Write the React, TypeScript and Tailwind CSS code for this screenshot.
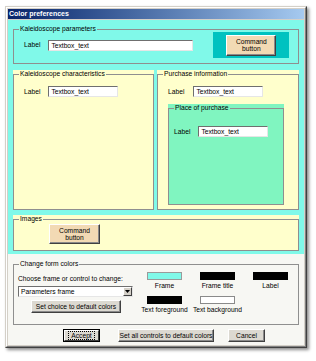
import React from "react";

const FONT = "font-['Liberation_Sans',Arial,sans-serif]";

function TextBox({ className }: { className: string }) {
  return (
    <div
      className={`h-[11px] bg-white border border-t-[#6f6f6f] border-l-[#6f6f6f] border-r-[#e6e6e6] border-b-[#e6e6e6] pl-[2px] leading-[9px] whitespace-nowrap ${className}`}
    >
      Textbox_text
    </div>
  );
}

function Btn({ className, children }: { className: string; children: React.ReactNode }) {
  return (
    <div
      className={`flex items-center justify-center text-center border border-t-white border-l-white border-r-[#404040] border-b-[#404040] shadow-[inset_-1px_-1px_0_#8a8a8a] ${className}`}
    >
      {children}
    </div>
  );
}

function Group({ title, className, children }: { title: string; className: string; children?: React.ReactNode }) {
  return (
    <fieldset className={`border border-[#8f8f8f] min-w-0 ${className}`}>
      <legend className="ml-[5px] px-[1px] leading-[8px] whitespace-nowrap">{title}</legend>
      {children}
    </fieldset>
  );
}

function LabelRow({ className, boxClass }: { className: string; boxClass: string }) {
  return (
    <div className={`flex items-center ${className}`}>
      <span className="leading-[8px]">Label</span>
      <TextBox className={boxClass} />
    </div>
  );
}

function Swatch({ color, label }: { color: string; label: string }) {
  return (
    <div className="flex flex-col items-center w-[35px]">
      <div className={`w-[35px] h-[8px] ${color}`} />
      <div className="mt-[2px] leading-[8px] whitespace-nowrap">{label}</div>
    </div>
  );
}

export default function App() {
  return (
    <div className={`w-[316px] h-[361px] bg-white pt-[6px] pl-[5px] ${FONT} text-[6.7px] text-black`}>
      <div className="w-[302px] h-[342px] border border-[#d4d0c8] border-r-[#404040] border-b-[#404040] shadow-[2px_2px_3px_rgba(0,0,0,0.45)]">
        <div className="h-full border border-white border-r-[#808080] border-b-[#808080] bg-[#d4d0c8] p-[1px] flex flex-col">
          {/* title bar */}
          <div className="h-[10px] bg-linear-to-r from-[#0a246a] to-[#a6caf0] text-white font-bold text-[7px] leading-[10px] pl-[1px] whitespace-nowrap">
            Color preferences
          </div>

          {/* cyan area */}
          <div className="mt-[1px] h-[234px] bg-[#80f9e9] pt-[5px] pl-[5px] flex flex-col">
            <Group title="Kaleidoscope parameters" className="w-[286px] h-[39px]">
              <div className="flex items-center h-[26px] mt-[-1px] pl-[10px]">
                <span className="leading-[8px]">Label</span>
                <TextBox className="ml-[8px] w-[145px]" />
                <div className="ml-[20px] w-[76px] h-[26px] bg-[#00c2c0] flex items-center justify-center">
                  <Btn className="w-[50px] h-[21px] bg-[#f2dab4] leading-[7px]">
                    Command
                    <br />
                    button
                  </Btn>
                </div>
              </div>
            </Group>

            <div className="mt-[6px] flex gap-[3px]">
              <div className="w-[141px] h-[140px] bg-[#ffffcc]">
                <Group title="Kaleidoscope characteristics" className="w-full h-full">
                  <LabelRow className="mt-[8px] pl-[10px]" boxClass="ml-[8px] w-[70px]" />
                </Group>
              </div>
              <div className="w-[142px] h-[140px] bg-[#ffffcc]">
                <Group title="Purchase information" className="w-full h-full">
                  <LabelRow className="mt-[8px] pl-[10px]" boxClass="ml-[9px] w-[70px]" />
                  <div className="ml-[10px] mt-[7px] w-[116px] h-[101px] bg-[#80f5c0]">
                    <Group title="Place of purchase" className="w-full h-full">
                      <LabelRow className="mt-[14px] pl-[5px]" boxClass="ml-[8px] w-[70px]" />
                    </Group>
                  </div>
                </Group>
              </div>
            </div>

            <div className="mt-[5px] w-[286px] h-[36px] bg-[#ffffcc]">
              <Group title="Images" className="w-full h-full">
                <Btn className="ml-[35px] mt-[1px] w-[51px] h-[20px] bg-[#f2dab4] leading-[7px]">
                  Command
                  <br />
                  button
                </Btn>
              </Group>
            </div>
          </div>

          {/* light area */}
          <div className="flex-1 bg-[#f7f7f3] pt-[6px] flex flex-col">
            <Group title="Change form colors" className="ml-[5px] w-[286px] h-[65px]">
              <div className="flex">
                <div className="pl-[4px] flex flex-col">
                  <div className="mt-[7px] leading-[8px] whitespace-nowrap">Choose frame or control to change:</div>
                  <div className="mt-[3px] w-[115px] h-[11px] bg-white border border-t-[#6f6f6f] border-l-[#6f6f6f] border-r-[#e6e6e6] border-b-[#e6e6e6] flex items-center">
                    <span className="flex-1 pl-[2px] leading-[9px] whitespace-nowrap">Parameters frame</span>
                    <div className="w-[9px] h-[9px] bg-[#d4d0c8] border border-t-white border-l-white border-r-[#404040] border-b-[#404040] flex items-center justify-center">
                      <svg width="5" height="3" viewBox="0 0 5 3">
                        <polygon points="0,0 5,0 2.5,3" fill="#000" />
                      </svg>
                    </div>
                  </div>
                  <Btn className="mt-[3px] ml-[13px] w-[90px] h-[13px] bg-[#dcd9d1] leading-[8px] whitespace-nowrap">
                    Set choice to default colors
                  </Btn>
                </div>
                <div className="ml-[14px] mt-[4px] grid grid-cols-[35px_35px_35px] gap-x-[18px] gap-y-[6px] h-fit">
                  <Swatch color="bg-[#80f9e9] border border-[#9a9a9a]" label="Frame" />
                  <Swatch color="bg-black" label="Frame title" />
                  <Swatch color="bg-black" label="Label" />
                  <Swatch color="bg-black" label="Text foreground" />
                  <Swatch color="bg-white border border-[#8a8a8a]" label="Text background" />
                </div>
              </div>
            </Group>

            <div className="mt-[4px] pl-[55px] flex">
              <div className="w-[37px] h-[13px] border border-black">
                <div className="h-full border border-t-white border-l-white border-r-[#404040] border-b-[#404040] bg-[#dcd9d1] flex items-center justify-center">
                  <span className="border border-dotted border-black px-[2px] leading-[7px]">Accept</span>
                </div>
              </div>
              <Btn className="ml-[18px] w-[96px] h-[13px] bg-[#dcd9d1] leading-[8px] whitespace-nowrap">
                Set all controls to default colors
              </Btn>
              <Btn className="ml-[14px] w-[37px] h-[13px] bg-[#dcd9d1] leading-[8px]">
                Cancel
              </Btn>
            </div>
          </div>
        </div>
      </div>
    </div>
  );
}
